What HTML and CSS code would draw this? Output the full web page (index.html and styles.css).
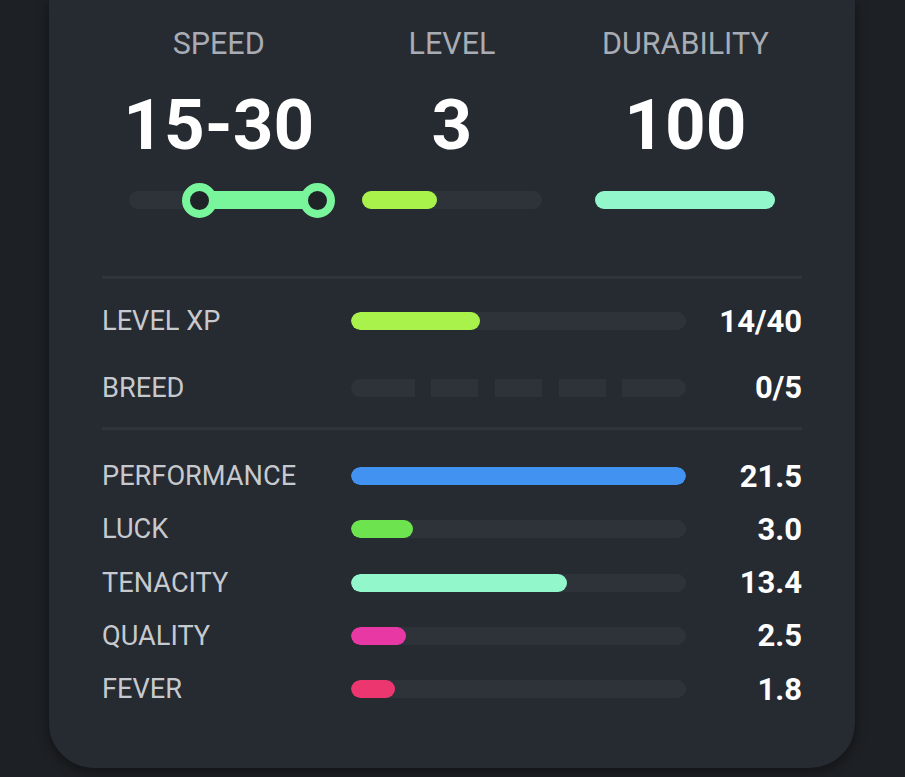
FILE: index.html
```
<!DOCTYPE html>
<html>
<head>
<meta charset="utf-8">
<link rel="stylesheet" href="styles.css">
</head>
<body>
<div class="card">
  <div class="top">
    <div class="stat">
      <div class="stat-label">SPEED</div>
      <div class="stat-value">15-30</div>
      <div class="track">
        <div class="range" style="left:71px;width:118px"></div>
        <div class="knob" style="left:71px"></div>
        <div class="knob" style="left:189px"></div>
      </div>
    </div>
    <div class="stat">
      <div class="stat-label">LEVEL</div>
      <div class="stat-value">3</div>
      <div class="track"><div class="fill lime" style="width:75px"></div></div>
    </div>
    <div class="stat">
      <div class="stat-label">DURABILITY</div>
      <div class="stat-value">100</div>
      <div class="track"><div class="fill mint" style="width:100%"></div></div>
    </div>
  </div>

  <div class="divider first"></div>

  <div class="rows progress">
    <div class="row">
      <div class="label">LEVEL XP</div>
      <div class="bar"><div class="fill lime" style="width:129px"></div></div>
      <div class="value">14/40</div>
    </div>
    <div class="row">
      <div class="label">BREED</div>
      <div class="segments">
        <div class="seg end"></div>
        <div class="seg"></div>
        <div class="seg"></div>
        <div class="seg"></div>
        <div class="seg end"></div>
      </div>
      <div class="value">0/5</div>
    </div>
  </div>

  <div class="divider"></div>

  <div class="rows attrs">
    <div class="row">
      <div class="label">PERFORMANCE</div>
      <div class="bar"><div class="fill blue" style="width:100%"></div></div>
      <div class="value">21.5</div>
    </div>
    <div class="row">
      <div class="label">LUCK</div>
      <div class="bar"><div class="fill green" style="width:62px"></div></div>
      <div class="value">3.0</div>
    </div>
    <div class="row">
      <div class="label">TENACITY</div>
      <div class="bar"><div class="fill mint" style="width:216px"></div></div>
      <div class="value">13.4</div>
    </div>
    <div class="row">
      <div class="label">QUALITY</div>
      <div class="bar"><div class="fill pink" style="width:55px"></div></div>
      <div class="value">2.5</div>
    </div>
    <div class="row">
      <div class="label">FEVER</div>
      <div class="bar"><div class="fill red" style="width:44px"></div></div>
      <div class="value">1.8</div>
    </div>
  </div>
</div>
</body>
</html>
```

FILE: styles.css
```
* { box-sizing: border-box; }
html, body {
  margin: 0;
  height: 777px;
  overflow: hidden;
  background: #1d2024;
  font-family: Roboto, "Noto Sans", sans-serif;
}
.card {
  margin: 0 50px 0 49px;
  height: 768px;
  background: #262a31;
  border-radius: 0 0 45px 45px;
  box-shadow: 0 4px 12px rgba(0, 0, 0, 0.4);
  padding: 26px 53px 0;
}
.top {
  display: grid;
  grid-template-columns: 1fr 1fr 1fr;
}
.stat {
  display: flex;
  flex-direction: column;
  align-items: center;
}
.stat-label {
  font-size: 30.5px;
  line-height: 36px;
  color: #a8acb4;
}
.stat-value {
  margin-top: 27px;
  font-size: 71px;
  line-height: 72px;
  font-weight: 700;
  color: #ffffff;
}
.track {
  position: relative;
  margin-top: 30px;
  width: 180px;
  height: 18px;
  border-radius: 9px;
  background: #2e333a;
}
.fill {
  height: 100%;
  border-radius: 9px;
}
.range {
  position: absolute;
  top: 0;
  height: 18px;
  background: #79f59b;
}
.knob {
  position: absolute;
  top: 50%;
  width: 35px;
  height: 35px;
  margin: -17.5px 0 0 -17.5px;
  border-radius: 50%;
  background: #1f2227;
  border: 8.5px solid #79f59b;
}
.lime { background: #a9f24c; }
.mint { background: #92f7cb; }
.blue { background: #4293f1; }
.green { background: #6de34f; }
.pink { background: #e838a4; }
.red { background: #ec3670; }

.divider {
  height: 3px;
  background: #30353c;
}
.divider.first { margin-top: 67px; }

.rows {
  display: flex;
  flex-direction: column;
}
.rows.progress {
  padding: 20px 0 17.5px;
  gap: 22.5px;
}
.rows.attrs {
  padding-top: 24px;
  gap: 9.3px;
}
.row {
  display: grid;
  grid-template-columns: 249px 335px 1fr;
  align-items: center;
  height: 44px;
}
.label {
  font-size: 27.2px;
  color: #c6c9ce;
}
.bar {
  height: 18px;
  border-radius: 9px;
  background: #2e333a;
  overflow: hidden;
}
.segments {
  display: flex;
  gap: 16.5px;
  height: 18px;
}
.seg {
  flex: 1;
  background: #2e333a;
}
.seg.end { flex: 0 0 63.5px; }
.seg:first-child { border-radius: 9px 0 0 9px; }
.seg:last-child { border-radius: 0 9px 9px 0; }
.value {
  text-align: right;
  font-size: 31px;
  font-weight: 700;
  color: #ffffff;
}
```
